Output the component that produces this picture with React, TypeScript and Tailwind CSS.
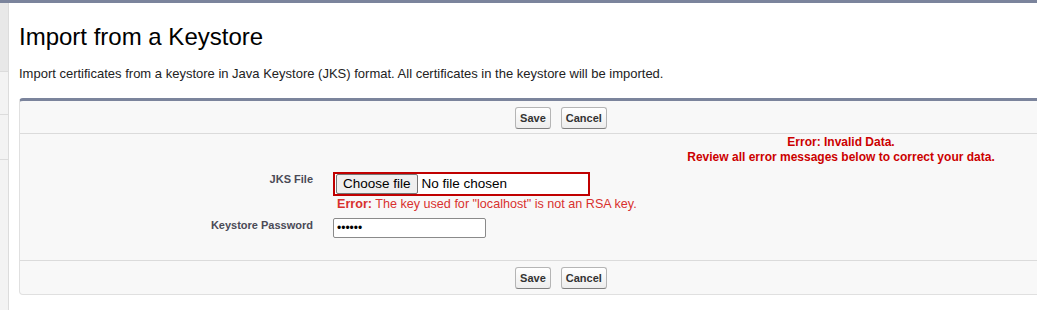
function PageButton({ label }: { label: string }) {
  return (
    <span className="inline-flex h-[22px] items-center rounded-[3px] border border-[#b5b5b5] border-b-[#7f7f7f] bg-gradient-to-b from-white to-[#ededed] px-[4px] text-[11px] font-bold text-[#333]">
      {label}
    </span>
  );
}

function ButtonRow({ top }: { top?: boolean }) {
  return (
    <div
      className={
        "flex h-[33px] items-start justify-center gap-[10px] pt-[6px] " +
        (top ? "border-b border-[#dbdbdb]" : "border-t border-[#dbdbdb] h-[34px]")
      }
    >
      <PageButton label="Save" />
      <PageButton label="Cancel" />
    </div>
  );
}

function SideStrip() {
  return (
    <div className="flex w-[9px] shrink-0 flex-col border-r border-[#dcdcdc] bg-[#f3f3f3]">
      <div className="h-[69px] border-b border-[#dcdcdc] bg-[#e8e8e8]" />
      <div className="h-[43px] border-b border-[#dcdcdc]" />
      <div className="h-[45px] border-b border-[#dcdcdc]" />
      <div className="flex-1" />
    </div>
  );
}

export default function App() {
  return (
    <div className="h-[310px] w-[1037px] overflow-hidden bg-white font-['Liberation_Sans',Arial,sans-serif] text-black">
      <div className="h-[3px] bg-[#7b849c]" />
      <div className="flex h-[307px]">
        <SideStrip />
        <div className="min-w-0 flex-1 pl-[10px]">
          <h1 className="mt-[19px] text-[24px] leading-[30px] text-black">Import from a Keystore</h1>
          <p className="mt-[14px] text-[13px] leading-[16px] text-[#222]">
            Import certificates from a keystore in Java Keystore (JKS) format. All certificates in the keystore will be imported.
          </p>

          {/* Panel */}
          <div className="mt-[16px] w-[1084px] rounded-[4px] border-x border-b border-t-[3px] border-[#e0e0e0] border-t-[#7b849c] bg-[#f8f8f8]">
            <ButtonRow top />

            <div className="h-[126px]">
              <div className="ml-auto mr-[66px] w-[390px] pt-[1px] text-center text-[12px] font-bold leading-[15px] text-[#cc0000]">
                <div>Error: Invalid Data.</div>
                <div>Review all error messages below to correct your data.</div>
              </div>

              <div className="mt-[7px] flex">
                <div className="w-[293px] pt-[0px] text-right text-[11px] font-bold leading-[14px] text-[#4a4a56]">JKS File</div>
                <div className="pl-[20px]">
                  <div className="flex h-[24px] w-[257px] items-center border-2 border-[#c00000] bg-white pl-[1px]">
                    <span className="flex h-[20px] items-center rounded-[2px] border border-[#767676] bg-[#efefef] px-[6px] text-[13.5px] text-black">
                      Choose file
                    </span>
                    <span className="pl-[4px] text-[13.5px] text-black">No file chosen</span>
                  </div>
                  <div className="mt-[1px] pl-[4px] text-[12.6px] leading-[14px] text-[#d8312e]">
                    <span className="font-bold">Error:</span> The key used for "localhost" is not an RSA key.
                  </div>
                </div>
              </div>

              <div className="mt-[7px] flex">
                <div className="w-[293px] text-right text-[11px] font-bold leading-[14px] text-[#4a4a56]">Keystore Password</div>
                <div className="pl-[20px]">
                  <div className="flex h-[20px] w-[153px] items-center rounded-[2px] border border-[#8a8a8a] bg-white pl-[3px] text-[12px] leading-none text-black">
                    ••••••
                  </div>
                </div>
              </div>
            </div>

            <ButtonRow />
          </div>
        </div>
      </div>
    </div>
  );
}
